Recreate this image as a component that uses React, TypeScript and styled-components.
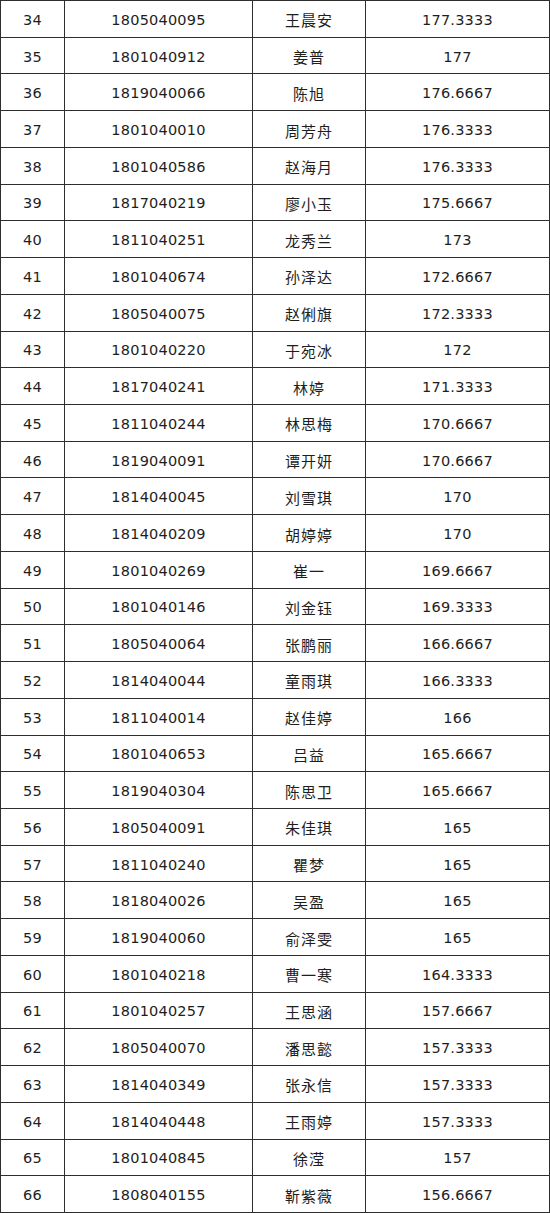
import React from 'react';
import styled, { createGlobalStyle } from 'styled-components';

const GlobalStyle = createGlobalStyle`
  html, body {
    margin: 0;
    padding: 0;
    background: #ffffff;
  }
`;

type Row = [number, string, string, string];

const rows: Row[] = [
  [34, '1805040095', '王晨安', '177.3333'],
  [35, '1801040912', '姜普', '177'],
  [36, '1819040066', '陈旭', '176.6667'],
  [37, '1801040010', '周芳舟', '176.3333'],
  [38, '1801040586', '赵海月', '176.3333'],
  [39, '1817040219', '廖小玉', '175.6667'],
  [40, '1811040251', '龙秀兰', '173'],
  [41, '1801040674', '孙泽达', '172.6667'],
  [42, '1805040075', '赵俐旗', '172.3333'],
  [43, '1801040220', '于宛冰', '172'],
  [44, '1817040241', '林婷', '171.3333'],
  [45, '1811040244', '林思梅', '170.6667'],
  [46, '1819040091', '谭开妍', '170.6667'],
  [47, '1814040045', '刘雪琪', '170'],
  [48, '1814040209', '胡婷婷', '170'],
  [49, '1801040269', '崔一', '169.6667'],
  [50, '1801040146', '刘金钰', '169.3333'],
  [51, '1805040064', '张鹏丽', '166.6667'],
  [52, '1814040044', '童雨琪', '166.3333'],
  [53, '1811040014', '赵佳婷', '166'],
  [54, '1801040653', '吕益', '165.6667'],
  [55, '1819040304', '陈思卫', '165.6667'],
  [56, '1805040091', '朱佳琪', '165'],
  [57, '1811040240', '瞿梦', '165'],
  [58, '1818040026', '吴盈', '165'],
  [59, '1819040060', '俞泽雯', '165'],
  [60, '1801040218', '曹一寒', '164.3333'],
  [61, '1801040257', '王思涵', '157.6667'],
  [62, '1805040070', '潘思懿', '157.3333'],
  [63, '1814040349', '张永信', '157.3333'],
  [64, '1814040448', '王雨婷', '157.3333'],
  [65, '1801040845', '徐滢', '157'],
  [66, '1808040155', '靳紫薇', '156.6667'],
];

const Sheet = styled.div`
  box-sizing: border-box;
  width: 550px;
  height: 1213px;
  display: grid;
  grid-template-rows: repeat(33, 1fr);
  border-top: 1px solid #2e2e2e;
  border-left: 1px solid #2e2e2e;
  font-family: "DejaVu Sans", "Noto Sans CJK SC", sans-serif;
  color: #1e1e1e;
`;

const TableRow = styled.div`
  display: grid;
  grid-template-columns: 64px 188px 113px 1fr;
`;

const Cell = styled.div<{ cjk?: boolean }>`
  display: flex;
  align-items: center;
  justify-content: center;
  padding-top: 2px;
  border-right: 1px solid #2e2e2e;
  border-bottom: 1px solid #2e2e2e;
  font-size: ${(props) => (props.cjk ? '15px' : '14.5px')};
  letter-spacing: ${(props) => (props.cjk ? '1px' : '0.2px')};
  font-family: ${(props) => (props.cjk ? '"Noto Sans CJK SC", sans-serif' : 'inherit')};
  white-space: nowrap;
`;

const App: React.FC = () => (
  <>
    <GlobalStyle />
    <Sheet>
      {rows.map(([rank, id, name, score]) => (
        <TableRow key={rank}>
          <Cell>{rank}</Cell>
          <Cell>{id}</Cell>
          <Cell cjk>{name}</Cell>
          <Cell>{score}</Cell>
        </TableRow>
      ))}
    </Sheet>
  </>
);

export default App;
